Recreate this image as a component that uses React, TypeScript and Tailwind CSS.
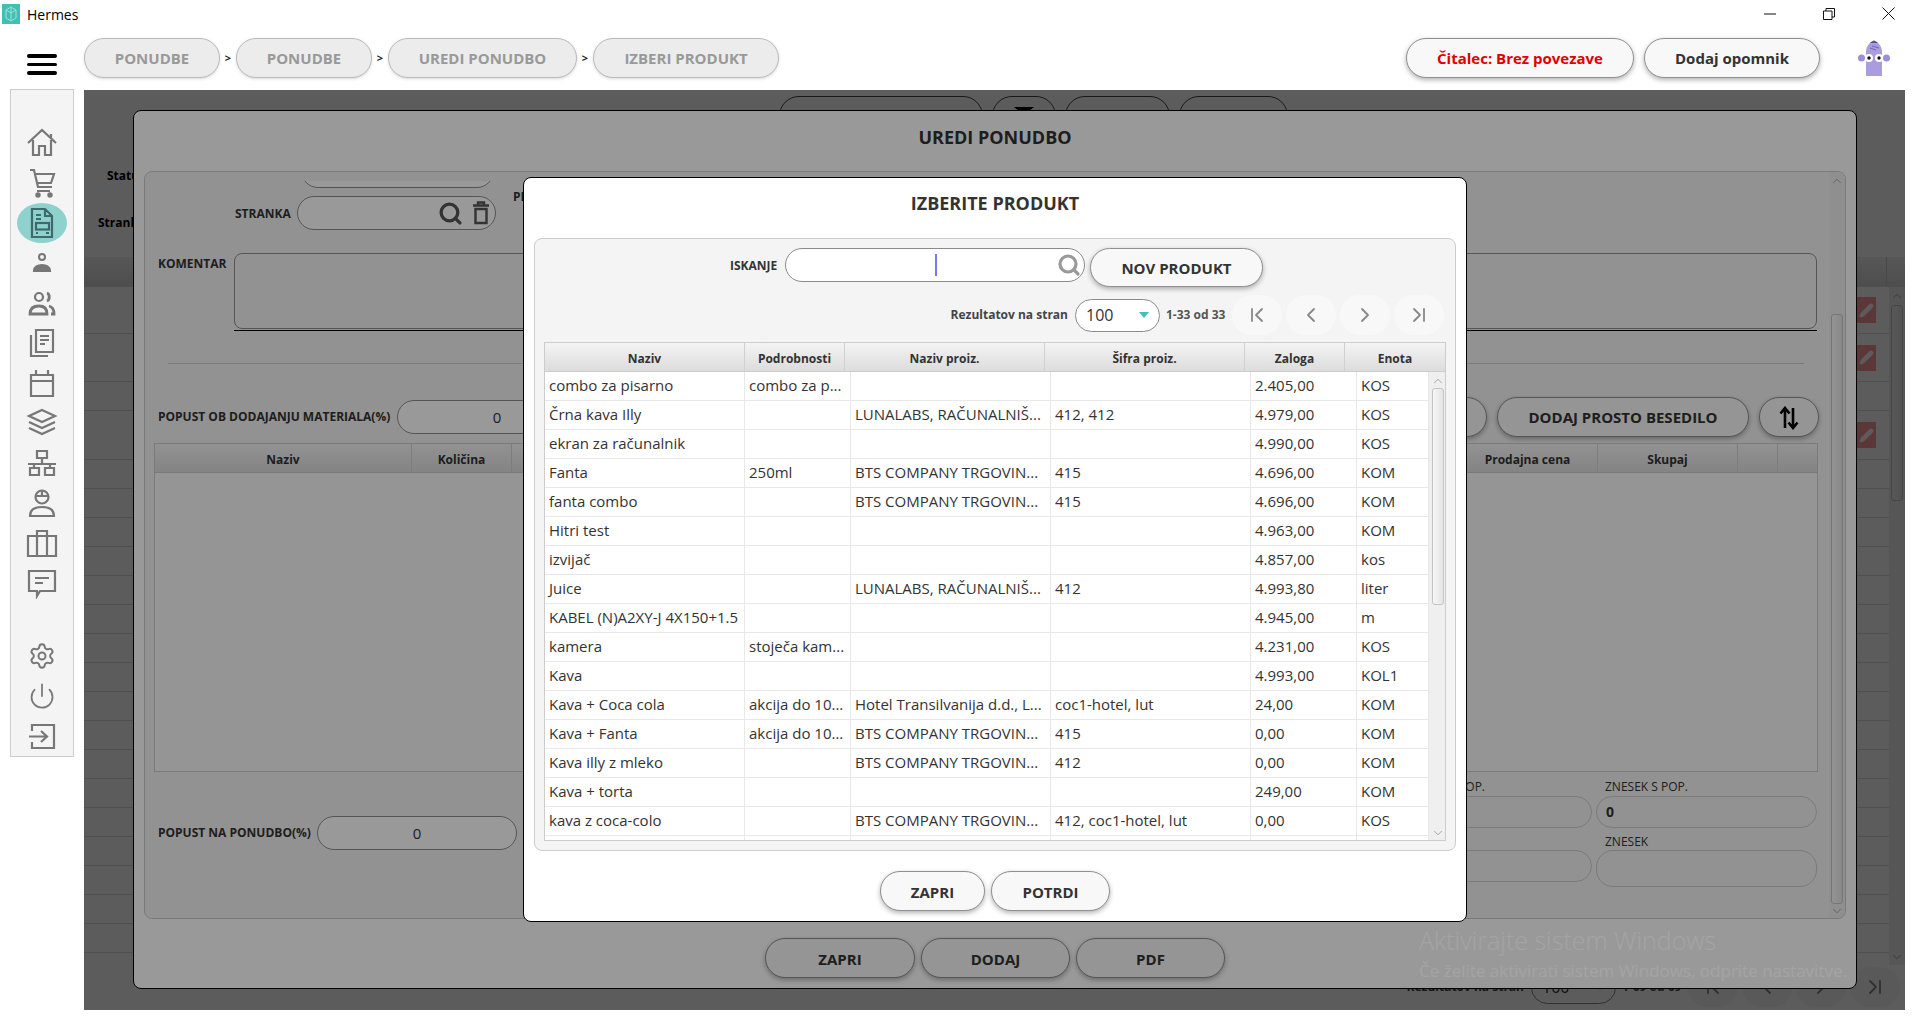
import { ReactNode } from "react";
import { ChevronDown, ChevronFirst, ChevronLast, ChevronLeft, ChevronRight, ChevronUp, Pencil, Power, Search, Settings } from "lucide-react";

const rows = [
  ["combo za pisarno", "combo za p...", "", "", "2.405,00", "KOS"],
  ["Črna kava Illy", "", "LUNALABS, RAČUNALNIŠ...", "412, 412", "4.979,00", "KOS"],
  ["ekran za računalnik", "", "", "", "4.990,00", "KOS"],
  ["Fanta", "250ml", "BTS COMPANY TRGOVIN...", "415", "4.696,00", "KOM"],
  ["fanta combo", "", "BTS COMPANY TRGOVIN...", "415", "4.696,00", "KOM"],
  ["Hitri test", "", "", "", "4.963,00", "KOM"],
  ["izvijač", "", "", "", "4.857,00", "kos"],
  ["Juice", "", "LUNALABS, RAČUNALNIŠ...", "412", "4.993,80", "liter"],
  ["KABEL (N)A2XY-J 4X150+1.5", "", "", "", "4.945,00", "m"],
  ["kamera", "stoječa kam...", "", "", "4.231,00", "KOS"],
  ["Kava", "", "", "", "4.993,00", "KOL1"],
  ["Kava + Coca cola", "akcija do 10...", "Hotel Transilvanija d.d., L...", "coc1-hotel, lut", "24,00", "KOM"],
  ["Kava + Fanta", "akcija do 10...", "BTS COMPANY TRGOVIN...", "415", "0,00", "KOM"],
  ["Kava illy z mleko", "", "BTS COMPANY TRGOVIN...", "412", "0,00", "KOM"],
  ["Kava + torta", "", "", "", "249,00", "KOM"],
  ["kava z coca-colo", "", "BTS COMPANY TRGOVIN...", "412, coc1-hotel, lut", "0,00", "KOS"],
  ["", "", "", "", "", ""],
];

const bodyCols = ["w-[200px]", "w-[106px]", "w-[200px]", "w-[200px]", "w-[106px]", "w-[72px]"];
const baseRowHeights = ["h-[47px]", "h-[48px]", "h-[29px]", "h-[49px]"];

function PillButton({ className, children }: { className: string; children?: ReactNode }) {
  return (
    <button className={`flex h-10 shrink-0 items-center justify-center rounded-[20px] border border-[#8f8f8f] bg-[#f8f8f8] pt-px text-[15px] font-bold text-[#333] shadow-[0_2px_5px_rgba(0,0,0,0.3)] ${className}`}>
      {children}
    </button>
  );
}

function Crumb({ label, className }: { label: string; className: string }) {
  return (
    <div className={`flex h-10 items-center justify-center rounded-[20px] border border-[#bbb] bg-[#ececec] pt-px text-[15px] font-bold text-[#999] shadow-[0_1px_3px_rgba(0,0,0,0.15)] ${className}`}>
      {label}
    </div>
  );
}

function Sep() {
  return <span className="flex h-10 w-4 items-center justify-center text-[11px] font-bold text-[#222]">&gt;</span>;
}

function Scrollbar({ className, thumb }: { className: string; thumb: string }) {
  return (
    <div className={`flex shrink-0 flex-col items-center bg-[#efefef] ${className}`}>
      <ChevronUp size={14} strokeWidth={1.2} className="mt-[2px] shrink-0 text-[#888]" />
      <div className={`w-[12px] shrink-0 rounded-[3px] border border-[#c4c4c4] bg-gradient-to-r from-[#f6f6f6] to-[#e4e4e4] ${thumb}`} />
      <ChevronDown size={14} strokeWidth={1.2} className="mb-[1px] mt-auto shrink-0 text-[#888]" />
    </div>
  );
}

function Pager({ range }: { range: string }) {
  const circle = "flex h-10 w-[50px] items-center justify-center rounded-full bg-[#f8f8f8] text-[#888]";
  return (
    <div className="flex h-10 items-center justify-end">
      <span className="text-[12px] font-bold text-[#444]">Rezultatov na stran</span>
      <div className="ml-[7px] flex h-[33px] w-[85px] items-center justify-between rounded-[17px] border border-[#8a8a8a] bg-white pl-[10px] pr-[10px] text-[16px] text-[#333]">
        100
        <span className="h-0 w-0 border-x-[5px] border-t-[6px] border-x-transparent border-t-[#45c0b5]" />
      </div>
      <span className="ml-[6px] w-[60px] whitespace-nowrap text-[12px] font-bold text-[#555]">{range}</span>
      <div className="ml-[6px] flex gap-1">
        <div className={circle}><ChevronFirst size={24} strokeWidth={1.8} /></div>
        <div className={circle}><ChevronLeft size={24} strokeWidth={1.8} /></div>
        <div className={circle}><ChevronRight size={24} strokeWidth={1.8} /></div>
        <div className={circle}><ChevronLast size={24} strokeWidth={1.8} /></div>
      </div>
    </div>
  );
}

function HeadCell({ className, label }: { className: string; label?: string }) {
  return (
    <div className={`flex h-full items-center justify-center border-r border-[#d0d0d0] pt-[3px] text-[12px] font-bold text-[#333] ${className}`}>
      {label}
    </div>
  );
}

function NavIcon({ children }: { children: ReactNode }) {
  return (
    <div className="flex h-10 items-center justify-center text-[#777]">
      <svg width="32" height="32" viewBox="0 0 32 32" fill="none" stroke="currentColor" strokeWidth="2.2">
        {children}
      </svg>
    </div>
  );
}

function Sidebar() {
  return (
    <aside className="-mt-px ml-[10px] flex h-[668px] w-16 shrink-0 flex-col border border-[#ccc] bg-[#f4f4f4] pt-[33px]">
      <NavIcon>
        <path d="M2 16 16 3l14 13M25 7v4M7 13v15h6v-9h6v9h6V13" />
      </NavIcon>
      <NavIcon>
        <path d="M4 3h4l4 17h14M10 7h18l-3 9H12M11 24h13" />
        <circle cx="12" cy="28" r="1.6" fill="currentColor" />
        <circle cx="24" cy="28" r="1.6" fill="currentColor" />
      </NavIcon>
      <div className="relative flex h-10 items-center justify-center">
        <div className="mx-auto flex h-10 w-[50px] items-center justify-center rounded-[50%] bg-[#8fd1cc] text-[#3d6a6c]">
          <svg width="32" height="34" viewBox="0 0 32 34" fill="none" stroke="currentColor" strokeWidth="2.2">
            <path d="M6 3h13l7 7v21H6zM19 3v7h7M10 9h5M10 13h5M10 27h2M20 27h3" />
            <rect x="10" y="17" width="13" height="6.5" />
          </svg>
        </div>
      </div>
      <NavIcon>
        <circle cx="16" cy="10" r="3" strokeWidth="2" />
        <path d="M8 24c0-4 4-6 8-6s8 2 8 6z" fill="currentColor" />
      </NavIcon>
      <NavIcon>
        <circle cx="13" cy="10" r="4" />
        <path d="M21 6c3 1 3 7 0 8M4 27c0-6 4-8 9-8s8 2 8 8zM23 19c4 1 5 4 5 8h-3" fill="none" strokeWidth="2.8" />
      </NavIcon>
      <NavIcon>
        <path d="M10 3h17v22H10zM5 8v21h17M14 9h9M14 13h9M14 17h5" />
      </NavIcon>
      <NavIcon>
        <path d="M5 8h22v21H5zM5 14h22M10 3v5M22 3v5" />
      </NavIcon>
      <NavIcon>
        <path d="m16 3 13 6-13 6-13-6zM3 15l13 6 13-6M3 21l13 6 13-6" />
      </NavIcon>
      <NavIcon>
        <path d="M11 4h10v7H11zM16 11v5M2 17h28M8 17v4M24 17v4M4 21h9v7H4zM19 21h9v7h-9z" />
      </NavIcon>
      <NavIcon>
        <circle cx="16" cy="10" r="6.5" />
        <path d="M10 9h12M16 4v5M4 29c0-7 6-9 12-9s12 2 12 9z" />
      </NavIcon>
      <NavIcon>
        <path d="M2 9h28v20H2zM11 9V4h10v5M11 9v20M21 9v20" />
      </NavIcon>
      <NavIcon>
        <path d="M3 4h26v20H14l-3 5v-5H3zM9 11h14M9 16h8" />
      </NavIcon>
      <div className="h-[33px]" />
      <div className="flex h-10 items-center justify-center text-[#777]"><Settings size={28} strokeWidth={1.7} /></div>
      <div className="flex h-10 items-center justify-center text-[#777]"><Power size={28} strokeWidth={1.5} /></div>
      <NavIcon>
        <path d="M6 11V5h22v23H6v-6M3 16.500h17M15 11l6 5.500-6 5.500" />
      </NavIcon>
    </aside>
  );
}

// page underneath both dialogs, only its edges show
function BasePage() {
  const pill = "h-10 rounded-[20px] border border-[#444] bg-white";
  return (
    <div className="absolute inset-0 bg-white">
      <div className="ml-[695px] flex gap-[9px] pt-[6px]">
        <div className={`w-[204px] ${pill}`} />
        <div className={`flex w-[64px] justify-center pt-[10px] ${pill}`}>
          <span className="h-0 w-0 border-x-[10px] border-t-[8px] border-x-transparent border-t-black" />
        </div>
        <div className={`w-[105px] ${pill}`} />
        <div className={`w-[109px] ${pill}`} />
      </div>
      <p className="ml-[23px] mt-[32px] text-[12px] font-bold leading-4 text-black">Status</p>
      <p className="ml-[14px] mt-[31px] text-[12px] font-bold leading-4 text-black">Stranka</p>
      <div className="mt-[26px] flex h-[30px] border-b border-[#ddd] bg-gradient-to-b from-[#f4f4f4] to-[#d8d8d8]">
        <div className="w-[1803px] border-r border-[#ccc]" />
      </div>
      <div className="flex h-[678px]">
        <div className="flex-1">
          {baseRowHeights.map((h, i) => (
            <div key={i} className={`flex items-center justify-end border-b border-[#ddd] pr-[13px] ${h}`}>
              {i !== 2 && (
                <div className="flex h-[26px] w-5 items-center justify-center bg-[#ff9a9a] text-white">
                  <Pencil size={15} fill="currentColor" />
                </div>
              )}
            </div>
          ))}
          {Array.from({ length: 17 }).map((_, i) => (
            <div key={i} className="h-[29px] border-b border-[#ddd]" />
          ))}
        </div>
        <Scrollbar className="w-[16px]" thumb="mt-[2px] h-[196px]" />
      </div>
      <div className="mt-[2px] pr-[5px]">
        <Pager range="1-69 od 69" />
      </div>
    </div>
  );
}

function EditDialog() {
  return (
    <div className="absolute left-[49px] top-5 flex h-[879px] w-[1724px] flex-col rounded-lg border border-black bg-white">
      <h2 className="h-[60px] pt-[14px] text-center text-[18px] font-bold leading-6 text-[#333]">UREDI PONUDBO</h2>
      <div className="mx-[10px] flex h-[748px] flex-col overflow-hidden rounded-lg border border-[#ccc] bg-[#f4f4f4]">
        <div className="flex h-full">
          <div className="mt-[9px] flex-1 overflow-hidden">
            <div className="-mt-[27px] ml-[156px] h-[34px] w-[193px] rounded-[17px] border border-[#8e8e8e] bg-white" />
            <div className="mt-2 flex h-[34px] items-center">
              <span className="ml-[90px] mt-[2px] w-[62px] text-[12px] font-bold text-[#333]">STRANKA</span>
              <div className="flex h-[34px] w-[199px] items-center justify-end gap-[9px] rounded-[17px] border border-[#8e8e8e] bg-white pr-[5px] text-[#555]">
                <Search size={25} strokeWidth={3.2} />
                <svg width="18" height="24" viewBox="0 0 18 24" fill="none" stroke="currentColor" strokeWidth="2.4">
                  <path d="M1 4.500h16M6 4V1.500h6V4M3.500 8h11v14h-11z" />
                </svg>
              </div>
              <span className="-mt-[32px] ml-[17px] text-[12px] font-bold text-[#333]">PREDLOG</span>
            </div>
            <div className="mt-[23px] flex">
              <span className="ml-[13px] mt-[2px] w-[76px] text-[12px] font-bold text-[#333]">KOMENTAR</span>
              <div className="w-[1583px] border-b border-black pb-px">
                <div className="h-[76px] rounded-lg border border-[#8e8e8e] bg-[#f4f4f4]" />
              </div>
            </div>
            <div className="ml-[23px] mt-[32px] h-px w-[1636px] bg-[#ccc]" />
            <div className="mt-[33px] flex h-10 items-center pr-[10px]">
              <span className="ml-[13px] w-[239px] text-[12px] font-bold text-[#333]">POPUST OB DODAJANJU MATERIALA(%)</span>
              <div className="flex h-[34px] w-[200px] items-center justify-center rounded-[17px] border border-[#8e8e8e] bg-white text-[15px] text-[#333]">0</div>
              <div className="ml-auto flex gap-[10px]">
                <PillButton className="w-[200px]" />
                <PillButton className="w-[252px]">DODAJ PROSTO BESEDILO</PillButton>
                <PillButton className="w-[60px]">
                  <svg width="20" height="24" viewBox="0 0 20 24" fill="none" stroke="black" strokeWidth="2.600">
                    <path d="M6 22V3M1.500 7.500 6 2l4.500 5.500M14 2v19M9.500 16.500 14 22l4.500-5.500" />
                  </svg>
                </PillButton>
              </div>
            </div>
            <div className="ml-[9px] mt-[6px] h-[329px] w-[1664px] border border-[#ccc] bg-[#f8f8f8]">
              <div className="flex h-[29px] border-b border-[#ccc] bg-gradient-to-b from-[#f4f4f4] to-[#dcdcdc]">
                <HeadCell className="w-[257px]" label="Naziv" />
                <HeadCell className="w-[100px]" label="Količina" />
                <HeadCell className="w-[946px]" />
                <HeadCell className="w-[140px]" label="Prodajna cena" />
                <HeadCell className="w-[140px]" label="Skupaj" />
                <HeadCell className="w-[40px]" />
                <HeadCell className="w-[39px] border-r-0" />
              </div>
            </div>
            <div className="flex justify-between pr-[12px]">
              <div className="ml-[13px] mt-[44px] flex h-[34px] items-center">
                <span className="w-[159px] text-[12px] font-bold text-[#333]">POPUST NA PONUDBO(%)</span>
                <div className="flex h-[34px] w-[200px] items-center justify-center rounded-[17px] border border-[#8e8e8e] bg-white text-[15px] text-[#333]">0</div>
              </div>
              <div className="mt-[7px] grid w-[446px] grid-cols-[221px_221px] gap-x-1 text-[12px] leading-4 text-[#333]">
                <span className="pl-[9px]">ZNESEK BREZ POP.</span>
                <span className="pl-[9px]">ZNESEK S POP.</span>
                <div className="mt-px h-8 rounded-[17px] border border-[#ccc] bg-[#f4f4f4]" />
                <div className="mt-px flex h-8 items-center rounded-[17px] border border-[#ccc] bg-[#f4f4f4] pl-[9px] text-[14px] font-bold">0</div>
                <span className="mt-[6px] pl-[9px]">ZNESEK Z DDV</span>
                <span className="mt-[6px] pl-[9px]">ZNESEK</span>
                <div className="h-8 rounded-[17px] border border-[#ccc] bg-[#f4f4f4]" />
                <div className="h-[37px] rounded-[17px] border border-[#ccc] bg-[#f4f4f4]" />
              </div>
            </div>
          </div>
          <Scrollbar className="w-4 bg-[#eee]" thumb="mt-[126px] h-[590px]" />
        </div>
      </div>
      <div className="mt-[19px] flex justify-center gap-[6px]">
        <PillButton className="w-[150px] !pt-[3px]">ZAPRI</PillButton>
        <PillButton className="w-[149px] !pt-[3px]">DODAJ</PillButton>
        <PillButton className="w-[149px] !pt-[3px]">PDF</PillButton>
      </div>
    </div>
  );
}

function ProductModal() {
  return (
    <div className="absolute left-[439px] top-[87px] flex h-[745px] w-[944px] flex-col rounded-lg border border-black bg-white">
      <h2 className="h-[60px] pt-[13px] text-center text-[18px] font-bold leading-6 text-[#333]">IZBERITE PRODUKT</h2>
      <div className="mx-[10px] h-[613px] rounded-lg border border-[#ccc] bg-[#f4f4f4] pt-[9px]">
        <div className="flex items-start">
          <span className="ml-[195px] flex h-[34px] w-[55px] items-center pt-[2px] text-[12px] font-bold text-[#333]">ISKANJE</span>
          <div className="relative flex h-[34px] w-[300px] items-center justify-end rounded-[17px] border border-[#8a8a8a] bg-white pr-[3px] text-[#999]">
            <span className="absolute left-[149px] top-[5px] h-[22px] w-[2px] bg-[#7a7af0]" />
            <Search size={24} strokeWidth={3.2} />
          </div>
          <PillButton className="ml-[5px] h-[39px] w-[173px]">NOV PRODUKT</PillButton>
        </div>
        <div className="mt-2 pr-[11px]">
          <Pager range="1-33 od 33" />
        </div>
        <div className="ml-[9px] mt-[7px] h-[499px] w-[902px] overflow-hidden border border-[#ccc] bg-white">
          <div className="flex h-[29px] border-b border-[#ccc] bg-gradient-to-b from-[#f4f4f4] to-[#dcdcdc]">
            <HeadCell className="w-[200px]" label="Naziv" />
            <HeadCell className="w-[100px]" label="Podrobnosti" />
            <HeadCell className="w-[200px]" label="Naziv proiz." />
            <HeadCell className="w-[200px]" label="Šifra proiz." />
            <HeadCell className="w-[100px]" label="Zaloga" />
            <HeadCell className="w-[100px] border-r-0" label="Enota" />
          </div>
          <div className="flex h-[469px]">
            <div className="w-[884px]">
              {rows.map((row, i) => (
                <div key={i} className="flex h-[29px] border-b border-[#e8e8e8]">
                  {row.map((cell, j) => (
                    <div key={j} className={`flex items-center overflow-hidden whitespace-nowrap border-r border-[#e8e8e8] pb-px pl-1 text-[15px] text-[#333] ${bodyCols[j]}`}>
                      {cell}
                    </div>
                  ))}
                </div>
              ))}
            </div>
            <Scrollbar className="w-[17px]" thumb="mt-0 h-[217px]" />
          </div>
        </div>
      </div>
      <div className="mt-[20px] flex justify-center gap-[6px]">
        <PillButton className="w-[105px] !pt-[3px]">ZAPRI</PillButton>
        <PillButton className="w-[119px] !pt-[3px]">POTRDI</PillButton>
      </div>
    </div>
  );
}

export default function App() {
  return (
    <div className="relative h-[1027px] w-[1920px] overflow-hidden bg-white font-['Open_Sans',sans-serif]">
      <header className="flex h-[27px] items-center">
        <svg width="18" height="20" viewBox="0 0 18 20" className="ml-[2px] mt-[1px]">
          <rect width="18" height="20" fill="#41bfb3" />
          <path d="M9 3 14 6v8l-5 3-5-3V6zM9 3v14M4 6l5 3 5-3" fill="none" stroke="#9fe0da" strokeWidth="1" />
        </svg>
        <span className="ml-[7px] mt-[1px] text-[14px] text-black">Hermes</span>
        <div className="ml-auto flex items-center text-[#111]">
          <svg width="12" height="12" viewBox="0 0 12 12" className="mr-[47px]"><path d="M0 6h12" stroke="currentColor" /></svg>
          <svg width="12" height="12" viewBox="0 0 12 12" className="mr-[47px]" fill="none" stroke="currentColor"><path d="M.5 3h8.500v8.500H.5zM3 3V.5h8.500V9H9" /></svg>
          <svg width="13" height="13" viewBox="0 0 13 13" className="mr-[25px]"><path d="m.5.5 12 12M12.500.5l-12 12" stroke="currentColor" /></svg>
        </div>
      </header>
      <div className="flex h-[63px] items-start pt-[11px]">
        <div className="ml-[27px] mt-[16px] flex w-[30px] flex-col gap-[5px]">
          <span className="h-[3.500px] rounded-sm bg-black" />
          <span className="h-[3.500px] rounded-sm bg-black" />
          <span className="h-[3.500px] rounded-sm bg-black" />
        </div>
        <nav className="ml-[27px] flex">
          <Crumb label="PONUDBE" className="w-[136px]" />
          <Sep />
          <Crumb label="PONUDBE" className="w-[136px]" />
          <Sep />
          <Crumb label="UREDI PONUDBO" className="w-[189px]" />
          <Sep />
          <Crumb label="IZBERI PRODUKT" className="w-[186px]" />
        </nav>
        <div className="ml-auto flex items-start">
          <PillButton className="w-[228px] !text-[#e00000]">Čitalec: Brez povezave</PillButton>
          <PillButton className="ml-[10px] w-[176px]">Dodaj opomnik</PillButton>
          <svg width="32" height="38" viewBox="0 0 32 38" className="ml-[38px] mr-[30px] mt-[1px]">
            <circle cx="3.500" cy="19" r="3.500" fill="#9b8fd6" />
            <circle cx="28.500" cy="19" r="3.500" fill="#9b8fd6" />
            <path d="M8 37V12q0-6 8-11 8 5 8 11v25z" fill="#a99ddd" />
            <path d="M12 4q4-4 8 0z" fill="#5a4a9a" />
            <path d="M12 9l6 2M14 7l7 2" stroke="#7565b5" strokeWidth="1" />
            <circle cx="11" cy="19" r="4" fill="white" />
            <circle cx="21" cy="19" r="4" fill="white" />
            <circle cx="11" cy="19" r="1.700" fill="#111" />
            <circle cx="21" cy="19" r="1.700" fill="#111" />
          </svg>
        </div>
      </div>
      <div className="flex">
        <Sidebar />
        <main className="relative ml-[10px] h-[920px] w-[1821px] overflow-hidden">
          <BasePage />
          <div className="absolute inset-0 bg-black/40" />
          <EditDialog />
          <div className="absolute inset-0 bg-black/40" />
          <ProductModal />
        </main>
      </div>
      {/* windows activation watermark */}
      <div className="pointer-events-none absolute left-[1419px] top-[922px] whitespace-nowrap text-white/10">
        <p className="text-[25px] font-light leading-9">Aktivirajte sistem Windows</p>
        <p className="mt-[3px] text-[17px] leading-5">Če želite aktivirati sistem Windows, odprite nastavitve.</p>
      </div>
    </div>
  );
}
